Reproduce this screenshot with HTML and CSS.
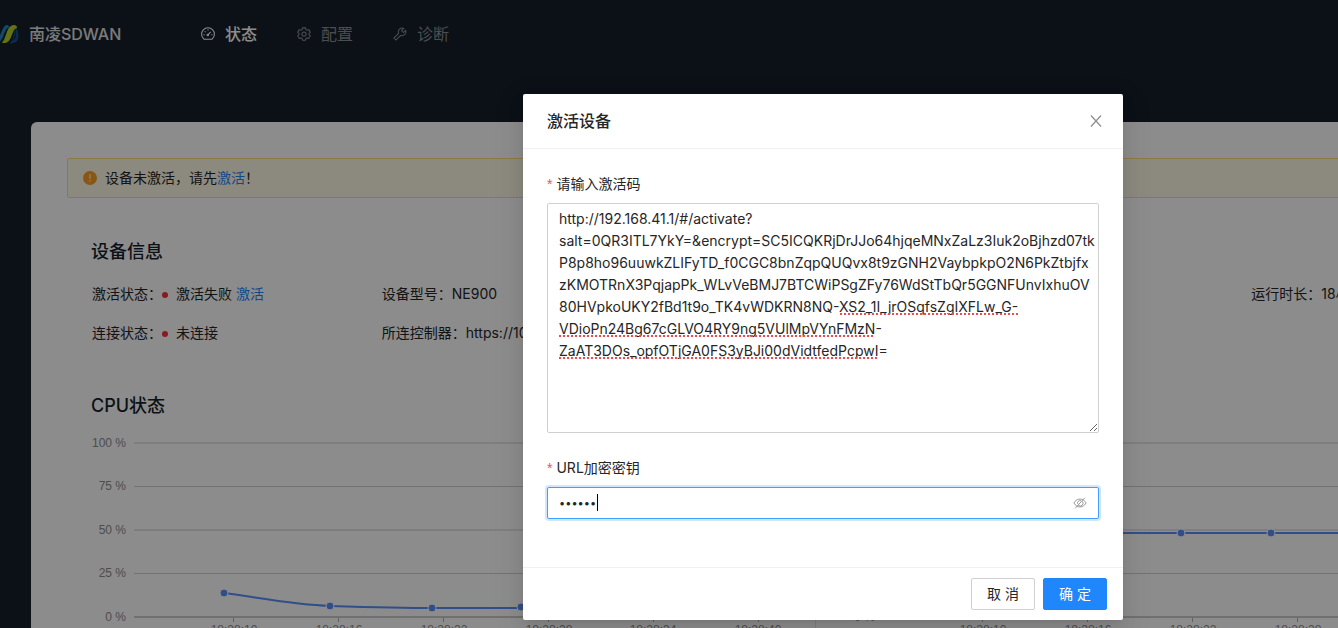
FILE: index.html
```html
<!DOCTYPE html>
<html lang="zh-CN">
<head>
<meta charset="utf-8">
<title>南凌SDWAN</title>
<link rel="stylesheet" href="styles.css">
</head>
<body>
<div class="page">
  <header class="header">
    <div class="brand">
      <svg class="brand-logo" viewBox="0 0 22 20" aria-hidden="true">
        <path d="M0 15C4 14 5 1 10 1c2 0 2 2 2 3C10 3 9 6 7 10c-2 5-3 8-7 8z" fill="#1f86c4"/>
        <path d="M12 19c5-1 4-10 6-13 1 2 0 8-3 11 5-1 5-10 2-15 5 3 6 13 2 16-2 1-5 2-7 1z" fill="#164f8c"/>
        <path d="M5 18c4-1 4-17 12-17 2 0 3 1 3 3-5 0-5 15-12 15-2 0-3 0-3-1z" fill="#b6cf28"/>
      </svg>
      <span>南凌SDWAN</span>
    </div>
    <nav class="nav">
      <a class="nav-item active" href="#status">
        <svg class="icon" viewBox="0 0 16 16" aria-hidden="true"><path d="M3.500 14h9a7.300 7.300 0 1 0-9 0zM8 9l3-3.400M8 2.600v1.400M2.800 8.800h1.400M11.800 8.800h1.400M4.200 5l1 1"/><circle cx="7.800" cy="9.200" r=".9"/></svg>
        <span>状态</span>
      </a>
      <a class="nav-item" href="#config">
        <svg class="icon" viewBox="0 0 16 16" aria-hidden="true"><path d="M6.300 1h3.400l.5 2 1.300.7 2-.6 1.700 2.900-1.500 1.500v1.200l1.500 1.500-1.700 2.900-2-.6-1.300.7-.5 2H6.300l-.5-2-1.300-.7-2 .6L.8 10.200l1.500-1.500V7.500L.8 6l1.700-2.900 2 .6L5.800 3z"/><circle cx="8" cy="8.100" r="2.400"/></svg>
        <span>配置</span>
      </a>
      <a class="nav-item" href="#diagnose">
        <svg class="icon" viewBox="0 0 16 16" aria-hidden="true"><path d="M14.400 3.800l-2.500 2.500-2.200-2.200 2.500-2.500a4.400 4.400 0 0 0-5.800 5.600L1 12.600 3.400 15l5.400-5.400a4.400 4.400 0 0 0 5.600-5.800z"/></svg>
        <span>诊断</span>
      </a>
    </nav>
  </header>

  <main class="card">
    <div class="alert">
      <svg class="alert-icon" viewBox="0 0 14 14" aria-hidden="true"><circle cx="7" cy="7" r="7" fill="#fa9d28"/><path d="M6.400 3.200h1.200v4.600H6.400zM6.300 9.200h1.400v1.400H6.300z" fill="#fffbe6"/></svg>
      <p class="alert-text">设备未激活，请先<a href="#activate">激活</a>！</p>
    </div>

    <div class="content">
      <section>
        <h2 class="title">设备信息</h2>
        <div class="info">
          <div class="info-item">激活状态：<i class="dot"></i>激活失败 <a href="#activate">激活</a></div>
          <div class="info-item">设备型号：NE900</div>
          <div class="info-item runtime">运行时长：18小时</div>
          <div class="info-item second">连接状态：<i class="dot"></i>未连接</div>
          <div class="info-item second">所连控制器：https://10.0.0.1</div>
        </div>
      </section>

      <div class="charts">
        <section class="chart">
          <h2 class="title">CPU状态</h2>
          <svg class="plot" width="701" height="210" viewBox="0 0 701 210">
            <g class="grid-lines"><path class="soft" d="M43 17H701M43 104H701"/><path d="M43 60.500H701M43 147.500H701"/><path class="axis" d="M43 191H701"/><path class="ticks" d="M142.500 192v4M247.500 192v4M352.500 192v4M457.500 192v4M562.500 192v4M667.500 192v4"/></g>
            <g class="y-labels"><text x="35" y="21">100 %</text><text x="35" y="64">75 %</text><text x="35" y="108">50 %</text><text x="35" y="151">25 %</text><text x="35" y="195">0 %</text></g>
            <g class="x-labels"><text x="143" y="208">18:28:10</text><text x="248" y="208">18:28:16</text><text x="353" y="208">18:28:22</text><text x="458" y="208">18:28:28</text><text x="562" y="208">18:28:34</text><text x="667" y="208">18:28:40</text></g>
            <path class="line" d="M133 167C170 172 204 179 239 180S310 182 341 182H430"/>
            <g class="points"><circle cx="133" cy="167" r="4"/><circle cx="239" cy="180" r="4"/><circle cx="341" cy="182" r="4"/><circle cx="430" cy="181" r="4"/></g>
          </svg>
        </section>
        <section class="chart">
          <h2 class="title">内存状态</h2>
          <svg class="plot" width="701" height="210" viewBox="0 0 701 210">
            <g class="grid-lines"><path class="soft" d="M43 17H701M43 104H701"/><path d="M43 60.500H701M43 147.500H701"/><path class="axis" d="M43 191H701"/><path class="ticks" d="M142.500 192v4M247.500 192v4M352.500 192v4M457.500 192v4M562.500 192v4M667.500 192v4"/></g>
            <g class="y-labels"><text x="35" y="21">100 %</text><text x="35" y="64">75 %</text><text x="35" y="108">50 %</text><text x="35" y="151">25 %</text><text x="35" y="195">0 %</text></g>
            <g class="x-labels"><text x="143" y="208">18:28:10</text><text x="248" y="208">18:28:16</text><text x="353" y="208">18:28:22</text><text x="458" y="208">18:28:28</text><text x="562" y="208">18:28:34</text><text x="667" y="208">18:28:40</text></g>
            <path class="line" d="M133 107H550"/>
            <g class="points"><circle cx="341" cy="107" r="4"/><circle cx="431" cy="107" r="4"/></g>
          </svg>
        </section>
      </div>
    </div>
  </main>

  <div class="mask">
    <form class="modal" role="dialog" aria-labelledby="modal-title">
      <div class="modal-header">
        <h1 class="modal-title" id="modal-title">激活设备</h1>
        <button class="close" type="button" aria-label="关闭"><svg viewBox="0 0 16 16" aria-hidden="true"><path d="M3 2.500l10 11M13 2.500L3 13.500"/></svg></button>
      </div>
      <div class="modal-body">
        <div class="field">
          <label class="label" for="code">请输入激活码</label>
          <div class="control">
            <textarea class="input textarea" id="code" spellcheck="false">http://192.168.41.1/#/activate?
salt=0QR3ITL7YkY=&amp;encrypt=SC5ICQKRjDrJJo64hjqeMNxZaLz3Iuk2oBjhzd07tk
P8p8ho96uuwkZLIFyTD_f0CGC8bnZqpQUQvx8t9zGNH2VaybpkpO2N6PkZtbjfx
zKMOTRnX3PqjapPk_WLvVeBMJ7BTCWiPSgZFy76WdStTbQr5GGNFUnvIxhuOV
80HVpkoUKY2fBd1t9o_TK4vWDKRN8NQ-XS2_1I_jrOSqfsZgIXFLw_G-
VDioPn24Bg67cGLVO4RY9ng5VUlMpVYnFMzN-
ZaAT3DOs_opfOTjGA0FS3yBJi00dVidtfedPcpwI=</textarea>
            <svg class="spelling" width="552" height="230" viewBox="0 0 552 230" aria-hidden="true"><path d="M293 111H471M12 133H328M12 155H331"/></svg>
          </div>
        </div>
        <div class="field">
          <label class="label" for="key">URL加密密钥</label>
          <div class="control">
            <input class="input password" id="key" type="password" value="123456">
            <span class="caret"></span>
            <button class="eye" type="button" aria-label="显示密钥"><svg viewBox="0 0 16 16" aria-hidden="true"><path d="M1 8c3.500-6 10.500-6 14 0-3.500 6-10.500 6-14 0zM2.500 14L13.500 2M10.500 6a3 3 0 0 1-4.500 4.500M5.300 9A3 3 0 0 1 9 5.300"/></svg></button>
          </div>
        </div>
      </div>
      <div class="modal-footer">
        <button class="btn" type="button">取 消</button>
        <button class="btn primary" type="submit">确 定</button>
      </div>
    </form>
  </div>
</div>
</body>
</html>
```

FILE: styles.css
```css
* { box-sizing: border-box; }

body {
  margin: 0;
  overflow: hidden;
  background: #171f2a;
  color: #262626;
  font: 14px/22px Inter, "Noto Sans CJK SC", sans-serif;
}

h1, h2, p { margin: 0; font-weight: 500; }
p { font-weight: 400; }
a { color: #1f87fb; text-decoration: none; }
button, input, textarea { font: inherit; color: inherit; }

.page { min-width: 1646px; }

.header {
  display: flex;
  align-items: center;
  height: 68px;
  margin-bottom: 54px;
  color: #fff;
  font-size: 16px;
}
.brand { display: flex; align-items: center; gap: 10px; width: 201px; font-weight: 500; color: #e0e0e0; }
.brand-logo { width: 22px; height: 20px; margin-left: -3px; }
.nav { display: flex; gap: 40px; }
.nav-item { display: flex; align-items: center; gap: 10px; color: #8a8d92; }
.nav-item.active { color: #fff; font-weight: 500; }
.icon { width: 14px; height: 14px; fill: none; stroke: currentColor; stroke-width: 1.200; }

.card {
  margin: 0 45px 0 31px;
  padding: 36px;
  border-radius: 6px;
  background: #fff;
}
.alert {
  display: flex;
  align-items: center;
  gap: 8px;
  height: 40px;
  padding: 0 15px;
  border: 1px solid #ffdf80;
  border-radius: 2px;
  background: #fffbe6;
}
.alert-icon { width: 14px; height: 14px; }
.content { padding: 40px 24px 0; }
.title { font-size: 18px; line-height: 28px; color: #171f2a; }
.info {
  display: grid;
  grid-template-columns: repeat(5, 1fr);
  row-gap: 17px;
  margin-top: 17px;
  padding-left: 1px;
}
.info-item { white-space: nowrap; }
.runtime { grid-column: 5; }
.second { grid-row: 2; }
.dot { display: inline-block; width: 6px; height: 6px; margin-right: 8px; border-radius: 50%; background: #f5323d; vertical-align: 1px; }

.charts { display: grid; grid-template-columns: 1fr 1fr; margin-top: 48px; }
.chart + .chart { padding-left: 24px; border-left: 1px solid #e8e8e8; }
.plot { display: block; margin-top: 6px; font: 12px "Liberation Sans", sans-serif; fill: #8c8c8c; }
.grid-lines { fill: none; stroke: #d0d0d0; }
.soft { stroke: #e6e6e6; stroke-width: 2; }
.axis { stroke: #cccccc; stroke-width: 2; }
.ticks { stroke: #b0b0b0; }
.y-labels { text-anchor: end; }
.x-labels { text-anchor: middle; }
.line { fill: none; stroke: #5b8ff9; stroke-width: 2; }
.points { fill: #5b8ff9; stroke: #fff; }

.mask {
  position: absolute;
  top: 0;
  left: 0;
  width: 100%;
  min-width: 1646px;
  height: 100%;
  padding-top: 94px;
  overflow: hidden;
  background: rgba(0, 0, 0, 0.45);
}
.modal {
  width: 600px;
  margin: 0 auto;
  border-radius: 2px;
  background: #fff;
  box-shadow: 0 3px 6px -4px rgba(0, 0, 0, 0.12), 0 6px 16px rgba(0, 0, 0, 0.08), 0 9px 28px 8px rgba(0, 0, 0, 0.05);
}
.modal-header {
  display: flex;
  align-items: center;
  justify-content: space-between;
  padding: 16px 19px 16px 24px;
  border-bottom: 1px solid #f0f0f0;
}
.modal-title { font-size: 16px; line-height: 22px; }
.close, .eye { display: flex; padding: 0; border: 0; background: none; color: #8c8c8c; }
.close svg { width: 16px; height: 16px; fill: none; stroke: currentColor; stroke-width: 1.200; }
.modal-body { padding: 24px 24px 0; }
.field { padding-bottom: 24px; }
.field + .field { padding-bottom: 48px; }
.label { display: block; margin-bottom: 8px; }
.label::before { content: "*"; margin-right: 4px; color: #ff4d4f; font-family: "Liberation Sans", sans-serif; }
.control { position: relative; }
.input {
  display: block;
  width: 100%;
  padding: 4px 11px;
  border: 1px solid #d0d0d0;
  border-radius: 2px;
  outline: 0;
  background: #fff;
}
.textarea { height: 230px; resize: vertical; white-space: pre; overflow-x: hidden; }
.spelling { position: absolute; top: 0; left: 0; fill: none; stroke: #f5484d; stroke-width: 2; stroke-dasharray: 2 2; pointer-events: none; }
.password { height: 32px; border-color: #40a0ff; box-shadow: 0 0 0 2px rgba(24, 135, 255, 0.2); font-size: 11px; }
.caret { position: absolute; top: 7px; left: 50px; width: 1px; height: 17px; background: #000; }
.eye { position: absolute; top: 9px; right: 12px; }
.eye svg { width: 14px; height: 14px; fill: none; stroke: currentColor; }
.modal-footer {
  display: flex;
  justify-content: flex-end;
  gap: 8px;
  padding: 10px 16px;
  border-top: 1px solid #f0f0f0;
}
.btn { width: 64px; height: 32px; padding: 0; border: 1px solid #d0d0d0; border-radius: 2px; background: #fff; }
.primary { border-color: #1f87fb; background: #1f87fb; color: #fff; }
```
